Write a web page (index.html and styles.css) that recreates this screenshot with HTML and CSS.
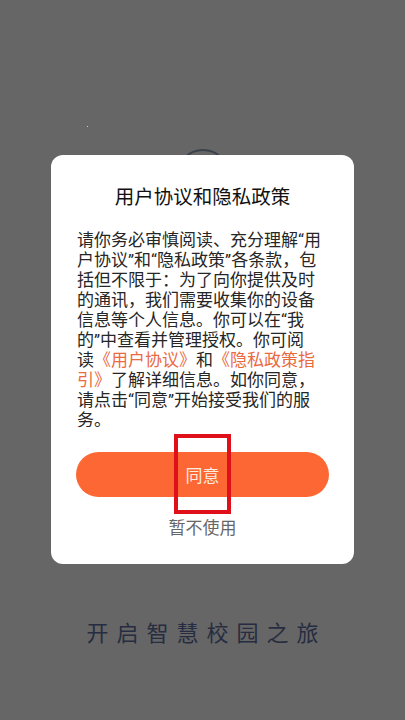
FILE: index.html
```html
<!DOCTYPE html>
<html lang="zh-CN">
<head>
<meta charset="utf-8">
<link rel="stylesheet" href="styles.css">
</head>
<body>
<div class="page">
  <span class="dot"></span>
  <span class="logo-ring"></span>
  <div class="dialog">
    <h1 class="title">用户协议和隐私政策</h1>
    <p class="body">请你务必审慎阅读、充分理解“用<br>户协议”和“隐私政策”各条款，包<br>括但不限于：为了向你提供及时<br>的通讯，我们需要收集你的设备<br>信息等个人信息。你可以在“我<br>的”中查看并管理授权。你可阅<br>读<span class="link">《用户协议》</span>和<span class="link">《隐私政策指<br>引》</span>了解详细信息。如你同意，<br>请点击“同意”开始接受我们的服<br>务。</p>
    <button class="agree">同意</button>
    <div class="decline">暂不使用</div>
  </div>
  <div class="slogan">开启智慧校园之旅</div>
  <span class="mark"></span>
</div>
</body>
</html>
```
FILE: styles.css
```css
html, body {
  margin: 0;
  padding: 0;
  background: #666666;
}
.page {
  position: relative;
  width: 405px;
  height: 720px;
  padding-top: 155px;
  box-sizing: border-box;
  display: flex;
  flex-direction: column;
  align-items: center;
  font-family: Roboto, "Noto Sans CJK SC", sans-serif;
}
.dot {
  position: absolute;
  left: 87px;
  top: 126px;
  width: 1px;
  height: 1px;
  background: #cfcfcf;
}
.logo-ring {
  position: absolute;
  left: 176px;
  top: 149px;
  width: 54px;
  height: 54px;
  border-radius: 50%;
  border: 2px solid #3a414b;
  box-sizing: border-box;
}
.dialog {
  position: relative;
  width: 303px;
  background: #ffffff;
  border-radius: 12px;
  padding: 30px 25px 24px;
  box-sizing: border-box;
  display: flex;
  flex-direction: column;
}
.title {
  margin: 0;
  font-size: 19.5px;
  font-weight: 400;
  line-height: 26px;
  color: #111111;
  text-align: center;
}
.body {
  margin: 19px 0 0 1px;
  font-size: 17px;
  line-height: 20px;
  color: #262626;
  white-space: nowrap;
}
.link {
  color: #ea6a3f;
}
.agree {
  margin-top: 22px;
  height: 45px;
  border: none;
  border-radius: 23px;
  background: #fc6733;
  color: #fdebe0;
  font-family: Roboto, "Noto Sans CJK SC", sans-serif;
  font-size: 17px;
  padding: 0;
}
.decline {
  margin-top: 19px;
  font-size: 17px;
  line-height: 24px;
  color: #666666;
  text-align: center;
}
.slogan {
  margin-top: 52px;
  font-family: "Noto Sans CJK SC", sans-serif;
  font-weight: 400;
  font-size: 22px;
  line-height: 30px;
  letter-spacing: 8px;
  padding-left: 8px;
  color: #262d40;
}
.mark {
  position: absolute;
  left: 174px;
  top: 434px;
  width: 57px;
  height: 80px;
  border: 4px solid #e0101a;
  box-sizing: border-box;
}
```
